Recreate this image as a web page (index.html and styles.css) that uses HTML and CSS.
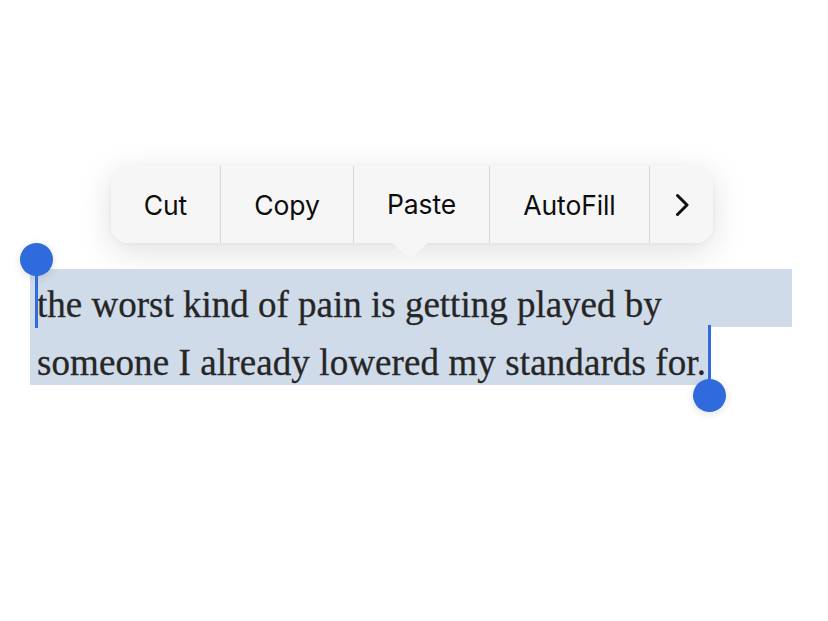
FILE: index.html
```html
<!DOCTYPE html>
<html>
<head>
<meta charset="utf-8">
<link rel="stylesheet" href="styles.css">
</head>
<body>
<div class="stage">
  <div class="menu-row">
    <div class="menu">
      <div class="item item-cut">Cut</div>
      <div class="item item-copy">Copy</div>
      <div class="item item-paste">Paste</div>
      <div class="item item-autofill">AutoFill</div>
      <div class="item item-more">
        <svg class="chev" width="14" height="24" viewBox="0 0 14 24"><polyline points="2.5,2.5 12,12 2.5,21.5" fill="none" stroke="#111" stroke-width="3" stroke-linecap="round" stroke-linejoin="round"/></svg>
      </div>
      <svg class="tail" width="36" height="16" viewBox="0 0 36 16"><path d="M0 0 L36 0 L20.5 14.2 Q18 16.2 15.5 14.2 Z" fill="#f6f6f6"/></svg>
    </div>
  </div>
  <div class="selection">
    <div class="line line-1">the worst kind of pain is getting played by</div>
    <div class="line line-2">someone I already lowered my standards for.</div>
    <div class="handle handle-start"><span class="knob"></span><span class="stem"></span></div>
    <div class="handle handle-end"><span class="stem"></span><span class="knob"></span></div>
  </div>
</div>
</body>
</html>
```

FILE: styles.css
```css
html, body {
  margin: 0;
  padding: 0;
  background: #ffffff;
}

.stage {
  width: 828px;
  height: 621px;
  padding-top: 166px;
  box-sizing: border-box;
  overflow: hidden;
}

.menu-row {
  display: flex;
  padding-left: 111px;
}

.menu {
  position: relative;
  display: flex;
  height: 77px;
  background: #f6f6f6;
  border-radius: 16px;
  box-shadow: 0 8px 34px rgba(0, 0, 0, 0.13), 0 1px 4px rgba(0, 0, 0, 0.04);
  font-family: "Inter", "Liberation Sans", sans-serif;
  font-size: 26.5px;
  color: #0d0d0d;
}

.item {
  display: flex;
  align-items: center;
  justify-content: center;
  border-left: 1px solid #d8d8d8;
  letter-spacing: -0.1px;
  box-sizing: border-box;
}

.item:first-child {
  border-left: none;
}

.item-cut { width: 109px; }
.item-copy { width: 133px; }
.item-paste { width: 136px; padding-bottom: 2px; }
.item-autofill { width: 160px; }
.item-more { width: 64px; }

.chev {
  display: block;
  margin-left: 1px;
}

.tail {
  position: absolute;
  left: 281px;
  top: 77px;
}

.selection {
  position: relative;
  margin-top: 26px;
  margin-left: 30px;
  width: 762px;
  font-family: "Liberation Serif", "DejaVu Serif", serif;
  font-size: 37px;
  color: #262626;
  -webkit-text-stroke: 0.3px #262626;
}

.line {
  background: #cfdbe9;
  line-height: 41px;
  padding: 15px 2px 2px 7px;
  white-space: nowrap;
}

.line-2 {
  display: inline-block;
  vertical-align: top;
  letter-spacing: 0.1px;
}

.handle {
  position: absolute;
  display: flex;
  flex-direction: column;
  align-items: center;
  width: 33px;
}

.knob {
  display: block;
  width: 33px;
  height: 33px;
  border-radius: 50%;
  background: #2f6bdc;
  box-shadow: 0 2px 8px rgba(0, 0, 0, 0.12);
}

.stem {
  display: block;
  width: 3px;
  background: #2f6bdc;
}

.handle-start {
  left: -10px;
  top: -26px;
}

.handle-start .knob {
  margin-bottom: -16px;
}

.handle-start .stem {
  height: 68px;
}

.handle-end {
  left: 663px;
  top: 56px;
}

.handle-end .stem {
  height: 70px;
  margin-bottom: -16px;
}
```
